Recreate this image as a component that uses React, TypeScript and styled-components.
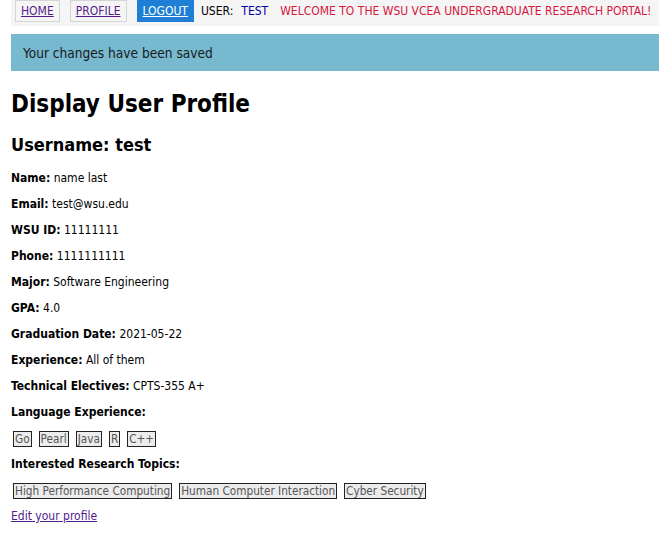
import * as React from 'react';
import styled, { createGlobalStyle } from 'styled-components';

const FONT = '"DejaVu Sans Condensed", "DejaVu Sans", Tahoma, sans-serif';

const GlobalStyle = createGlobalStyle`
  body {
    margin: 0;
    background: #ffffff;
    font-family: ${FONT};
    font-stretch: condensed;
    color: #000;
  }
`;

const Page = styled.div`
  padding: 0 0 0 11px;
  overflow: hidden;
`;

const NavBar = styled.nav`
  display: flex;
  align-items: flex-start;
  height: 26px;
  margin-right: -20px;
  padding-left: 4px;
  background: #f5f5f5;
  font-size: 12px;
`;

const NavLink = styled.a<{ active?: boolean }>`
  display: flex;
  align-items: center;
  height: 22px;
  box-sizing: border-box;
  padding: 0 5px;
  margin-right: ${p => (p.active ? 7 : 10)}px;
  border: 1px solid ${p => (p.active ? '#1f7fd4' : '#d4d4d4')};
  background: ${p => (p.active ? '#1f7fd4' : 'transparent')};
  color: ${p => (p.active ? '#ffffff' : '#551a8b')};
  text-decoration: underline;
  white-space: nowrap;
`;

const NavText = styled.span<{ tone: string; gap: number }>`
  display: flex;
  align-items: center;
  height: 22px;
  color: ${p => p.tone};
  margin-right: ${p => p.gap}px;
  white-space: nowrap;
`;

const Alert = styled.div`
  margin-top: 8px;
  margin-right: -20px;
  height: 37px;
  display: flex;
  align-items: center;
  padding-left: 12px;
  background: #77b9cf;
  color: #1a1a1a;
  font-size: 13.6px;
`;

const Title = styled.h1`
  margin: 19px 0 0;
  font-size: 24px;
  line-height: 29px;
  font-weight: bold;
`;

const Subtitle = styled.h2`
  margin: 15px 0 0;
  font-size: 18px;
  line-height: 22px;
  font-weight: bold;
`;

const Fields = styled.div`
  margin-top: 15px;
  display: flex;
  flex-direction: column;
  gap: 11px;
  font-size: 12px;
`;

const Row = styled.div`
  line-height: 15px;
`;

const Label = styled.b`
  font-weight: bold;
`;

const TagList = styled.div`
  display: flex;
  align-items: center;
  height: 15px;
  gap: 7px;
  padding-left: 2px;
`;

const Tag = styled.span`
  display: inline-flex;
  align-items: center;
  height: 16px;
  box-sizing: border-box;
  padding: 0 1px;
  background: #ececec;
  border: 1px solid #222;
  color: #555;
  font-size: 11.7px;
`;

const EditLink = styled.a`
  color: #551a8b;
  text-decoration: underline;
  font-size: 12px;
`;

const fields: [string, string][] = [
  ['Name:', 'name last'],
  ['Email:', 'test@wsu.edu'],
  ['WSU ID:', '11111111'],
  ['Phone:', '1111111111'],
  ['Major:', 'Software Engineering'],
  ['GPA:', '4.0'],
  ['Graduation Date:', '2021-05-22'],
  ['Experience:', 'All of them'],
  ['Technical Electives:', 'CPTS-355 A+'],
];

const languages = ['Go', 'Pearl', 'Java', 'R', 'C++'];
const topics = ['High Performance Computing', 'Human Computer Interaction', 'Cyber Security'];

export default function App() {
  return (
    <Page>
      <GlobalStyle />
      <NavBar>
        <NavLink href="#">HOME</NavLink>
        <NavLink href="#">PROFILE</NavLink>
        <NavLink href="#" active>LOGOUT</NavLink>
        <NavText tone="#000" gap={8}>USER:</NavText>
        <NavText tone="#0000a0" gap={12}>TEST</NavText>
        <NavText tone="#d6163f" gap={0}>WELCOME TO THE WSU VCEA UNDERGRADUATE RESEARCH PORTAL!</NavText>
      </NavBar>
      <Alert>Your changes have been saved</Alert>
      <Title>Display User Profile</Title>
      <Subtitle>Username: test</Subtitle>
      <Fields>
        {fields.map(([label, value]) => (
          <Row key={label}>
            <Label>{label}</Label> {value}
          </Row>
        ))}
        <Row>
          <Label>Language Experience:</Label>
        </Row>
        <TagList>
          {languages.map(l => (
            <Tag key={l}>{l}</Tag>
          ))}
        </TagList>
        <Row>
          <Label>Interested Research Topics:</Label>
        </Row>
        <TagList>
          {topics.map(t => (
            <Tag key={t}>{t}</Tag>
          ))}
        </TagList>
        <Row>
          <EditLink href="#">Edit your profile</EditLink>
        </Row>
      </Fields>
    </Page>
  );
}
